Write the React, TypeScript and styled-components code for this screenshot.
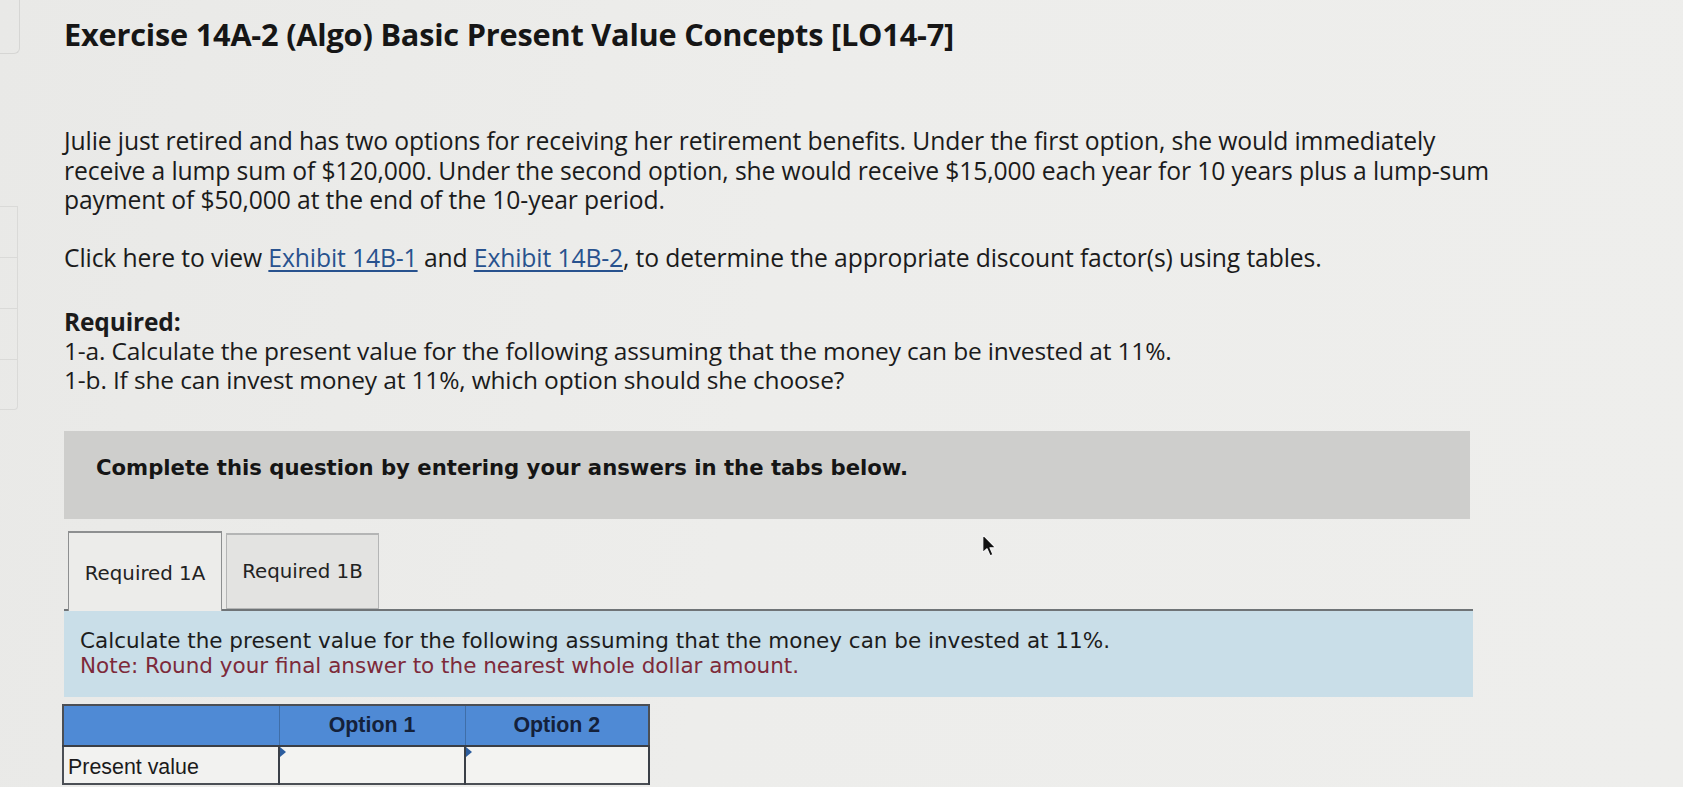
import React from 'react'
import styled, { createGlobalStyle } from 'styled-components'

const GlobalStyle = createGlobalStyle`
  html, body {
    margin: 0;
    padding: 0;
    background: #ebebe9;
    overflow: hidden;
  }
  * { box-sizing: border-box; }
`

const App = () => {
  return (
    <>
      <GlobalStyle />
      <Page>
        <Sidebar>
          <SideTab />
          <SideList>
            <SideItem />
            <SideItem />
            <SideItem />
            <SideItem $last />
          </SideList>
        </Sidebar>

        <Main>
          <Title>Exercise 14A-2 (Algo) Basic Present Value Concepts [LO14-7]</Title>

          <Paragraph>
            Julie just retired and has two options for receiving her retirement benefits. Under the first option, she would immediately
            <br />
            receive a lump sum of $120,000. Under the second option, she would receive $15,000 each year for 10 years plus a lump-sum
            <br />
            payment of $50,000 at the end of the 10-year period.
          </Paragraph>

          <Paragraph $top={28}>
            Click here to view <ExhibitLink href="#">Exhibit 14B-1</ExhibitLink> and{' '}
            <ExhibitLink href="#">Exhibit 14B-2</ExhibitLink>, to determine the appropriate discount factor(s) using tables.
          </Paragraph>

          <Required>
            <RequiredLabel>Required:</RequiredLabel>
            <div>1-a. Calculate the present value for the following assuming that the money can be invested at 11%.</div>
            <div>1-b. If she can invest money at 11%, which option should she choose?</div>
          </Required>

          <InstructionBox>
            <InstructionText>Complete this question by entering your answers in the tabs below.</InstructionText>
          </InstructionBox>

          <TabBar>
            <Tab $active>Required 1A</Tab>
            <Tab>Required 1B</Tab>
            <Pointer viewBox="0 0 16 24" aria-hidden="true">
              <path
                d="M1.5 1.5 L1.5 19 L5.6 15.2 L8.6 22 L11.4 20.8 L8.5 14.2 L14 14.2 Z"
                fill="#111"
                stroke="#f4f4f4"
                strokeWidth="1.2"
                strokeLinejoin="round"
              />
            </Pointer>
          </TabBar>

          <TaskPanel>
            <TaskText>Calculate the present value for the following assuming that the money can be invested at 11%.</TaskText>
            <NoteText>Note: Round your final answer to the nearest whole dollar amount.</NoteText>
          </TaskPanel>

          <AnswerTable>
            <thead>
              <tr>
                <HeadCell $w={216} />
                <HeadCell $w={186}>Option 1</HeadCell>
                <HeadCell $w={184}>Option 2</HeadCell>
              </tr>
            </thead>
            <tbody>
              <tr>
                <LabelCell>Present value</LabelCell>
                <InputCell>
                  <Marker />
                </InputCell>
                <InputCell>
                  <Marker />
                </InputCell>
              </tr>
            </tbody>
          </AnswerTable>
        </Main>
      </Page>
    </>
  )
}

export default App

/* layout */

const Page = styled.div`
  display: flex;
  width: 1683px;
  height: 787px;
  background: linear-gradient(100deg, #e9e9e7 0%, #ededeb 45%, #eeeeec 100%);
  color: #1b1b1b;
`

const Sidebar = styled.div`
  width: 22px;
  flex-shrink: 0;
  display: flex;
  flex-direction: column;
`

const SideTab = styled.div`
  height: 54px;
  width: 20px;
  border: 1px solid #d6d6d4;
  border-top: none;
  border-left: none;
  border-bottom-right-radius: 6px;
`

const SideList = styled.div`
  margin-top: 152px;
  width: 18px;
  display: flex;
  flex-direction: column;
`

const SideItem = styled.div<{ $last?: boolean }>`
  height: 51px;
  border: 1px solid #dadad8;
  border-left: none;
  border-bottom: ${(p) => (p.$last ? '1px solid #dadad8' : 'none')};
  border-bottom-right-radius: ${(p) => (p.$last ? '4px' : '0')};
`

const Main = styled.div`
  flex: 1;
  padding: 15px 0 0 42px;
  display: flex;
  flex-direction: column;
  align-items: flex-start;
`

/* text */

const Title = styled.h1`
  margin: 0;
  font-family: 'Open Sans', 'Liberation Sans', sans-serif;
  font-weight: 700;
  font-size: 30.7px;
  line-height: 38px;
  letter-spacing: -0.2px;
  color: #161616;
`

const Paragraph = styled.p<{ $top?: number }>`
  margin: ${(p) => (p.$top ?? 73)}px 0 0 0;
  font-family: 'Open Sans', 'Liberation Sans', sans-serif;
  font-size: 24.7px;
  line-height: 29.5px;
  letter-spacing: -0.12px;
  white-space: nowrap;
  color: #1b1b1b;
`

const ExhibitLink = styled.a`
  color: #28528e;
  text-decoration: underline;
  text-decoration-thickness: 1.5px;
  text-underline-offset: 3px;
`

const Required = styled.div`
  margin-top: 35px;
  font-family: 'Open Sans', 'Liberation Sans', sans-serif;
  font-size: 24.5px;
  line-height: 29px;
  letter-spacing: -0.15px;
  white-space: nowrap;
  color: #1b1b1b;
`

const RequiredLabel = styled.div`
  font-weight: 700;
`

/* instructions */

const InstructionBox = styled.div`
  margin-top: 37px;
  width: 1406px;
  height: 88px;
  background: #cececc;
  padding: 23px 0 0 32px;
`

const InstructionText = styled.div`
  font-family: 'DejaVu Sans', Verdana, sans-serif;
  font-weight: 700;
  font-size: 21.2px;
  line-height: 28px;
  color: #151515;
`

/* tabs */

const TabBar = styled.div`
  position: relative;
  margin-top: 12px;
  width: 1409px;
  display: flex;
  align-items: flex-end;
  gap: 4px;
  padding-left: 4px;
  border-bottom: 2px solid #6f7477;
`

const Tab = styled.div<{ $active?: boolean }>`
  height: ${(p) => (p.$active ? '80px' : '76px')};
  width: ${(p) => (p.$active ? '154px' : '153px')};
  margin-bottom: ${(p) => (p.$active ? '-2px' : '0')};
  display: flex;
  align-items: center;
  justify-content: center;
  padding-top: ${(p) => (p.$active ? '2px' : '0')};
  font-family: 'DejaVu Sans', Verdana, sans-serif;
  font-size: 19.8px;
  color: #222;
  background: ${(p) => (p.$active ? '#ececea' : '#e3e3e1')};
  border: 1px solid ${(p) => (p.$active ? '#8d8f90' : '#b4b5b5')};
  border-top-width: 2px;
  border-bottom: ${(p) => (p.$active ? 'none' : '1px solid #b4b5b5')};
`

const Pointer = styled.svg`
  position: absolute;
  left: 917px;
  top: 2px;
  width: 17px;
  height: 25px;
`

/* task */

const TaskPanel = styled.div`
  width: 1409px;
  height: 86px;
  background: #c9dee8;
  padding: 17px 0 0 16px;
  font-family: 'DejaVu Sans', Verdana, sans-serif;
  font-size: 21.5px;
  line-height: 25px;
  white-space: nowrap;
`

const TaskText = styled.div`
  color: #1c1c1c;
`

const NoteText = styled.div`
  color: #7d2a3a;
`

/* answer table */

const AnswerTable = styled.table`
  margin-top: 7px;
  margin-left: -2px;
  border-collapse: collapse;
  font-family: 'Liberation Sans', Arial, sans-serif;
  border: 2px solid #4b4f55;
`

const HeadCell = styled.th<{ $w: number }>`
  width: ${(p) => p.$w}px;
  height: 41px;
  background: #4f8ad5;
  color: #14213a;
  font-weight: 700;
  font-size: 21.4px;
  text-align: center;
  border: 1.5px solid #3f6ea8;
  border-bottom: 2px solid #3a3f47;
  padding: 0;
`

const LabelCell = styled.td`
  height: 38px;
  background: #f2f2f0;
  font-size: 21.4px;
  color: #1b1b1b;
  padding: 4px 0 0 4px;
  border-right: 2px solid #3a3f47;
`

const InputCell = styled.td`
  position: relative;
  height: 38px;
  background: #f3f3f1;
  border-right: 2px solid #3a3f47;
  padding: 0;
`

const Marker = styled.span`
  position: absolute;
  left: 0;
  top: 0;
  width: 0;
  height: 0;
  border-top: 5px solid transparent;
  border-bottom: 5px solid transparent;
  border-left: 6px solid #2c5d9e;
`
